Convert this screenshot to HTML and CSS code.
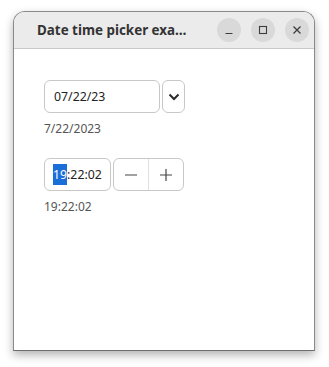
FILE: index.html
```html
<!DOCTYPE html>
<html>
<head>
<meta charset="utf-8">
<link rel="stylesheet" href="styles.css">
</head>
<body>
<div class="window">
  <div class="titlebar">
    <div class="title">Date time picker exa…</div>
    <div class="controls">
      <div class="ctl"><svg width="10" height="10" viewBox="0 0 10 10"><path d="M1.5 8.5h7" stroke="#3d3d3d" stroke-width="1.2"/></svg></div>
      <div class="ctl"><svg width="10" height="10" viewBox="0 0 10 10"><rect x="1.5" y="1.5" width="7" height="7" fill="none" stroke="#3d3d3d" stroke-width="1.1"/></svg></div>
      <div class="ctl"><svg width="10" height="10" viewBox="0 0 10 10"><path d="M1.5 1.5l7 7M8.5 1.5l-7 7" stroke="#3d3d3d" stroke-width="1.3"/></svg></div>
    </div>
  </div>
  <div class="content">
    <div class="group">
      <div class="row">
        <div class="field date">07/22/23</div>
        <div class="dropbtn"><svg width="12" height="8" viewBox="0 0 12 8"><path d="M1.5 1.5l4.5 4.5 4.5-4.5" fill="none" stroke="#2b2b2b" stroke-width="2"/></svg></div>
      </div>
      <div class="value">7/22/2023</div>
    </div>
    <div class="group">
      <div class="row">
        <div class="field time"><span class="sel">19</span>:22:02</div>
        <div class="spin">
          <div class="sbtn"><svg width="14" height="14" viewBox="0 0 14 14"><path d="M1 7h12" stroke="#444" stroke-width="1.2"/></svg></div>
          <div class="sbtn"><svg width="14" height="14" viewBox="0 0 14 14"><path d="M1 7h12M7 1v12" stroke="#444" stroke-width="1.2"/></svg></div>
        </div>
      </div>
      <div class="value">19:22:02</div>
    </div>
  </div>
</div>
</body>
</html>
```
FILE: styles.css
```css
html, body {
  margin: 0;
  padding: 0;
  background: #ffffff;
  width: 329px;
  height: 367px;
  overflow: hidden;
}
body {
  padding: 11px 0 0 13px;
  box-sizing: border-box;
}
.window {
  width: 302px;
  height: 340px;
  box-sizing: border-box;
  border: 1px solid #8a8a8a;
  border-bottom-color: #6e6e6e;
  border-radius: 12px 12px 0 0;
  background: #ffffff;
  box-shadow: 0 4px 10px rgba(0,0,0,0.3);
  display: flex;
  flex-direction: column;
  overflow: hidden;
}
.titlebar {
  height: 36px;
  flex: none;
  background: #ebebeb;
  border-bottom: 1px solid #c9c9c9;
  display: flex;
  align-items: center;
  padding: 0 5px 0 23px;
}
.title {
  flex: 1;
  font-family: "Noto Sans", "Open Sans", sans-serif;
  font-weight: bold;
  font-size: 13.4px;
  color: #333333;
}
.controls {
  display: flex;
  gap: 10px;
}
.ctl {
  width: 24px;
  height: 24px;
  border-radius: 50%;
  background: #d9d9d9;
  display: flex;
  align-items: center;
  justify-content: center;
}
.content {
  padding: 31px 0 0 30px;
  display: flex;
  flex-direction: column;
  gap: 21px;
  font-family: "Noto Sans", "Open Sans", sans-serif;
}
.group {
  display: flex;
  flex-direction: column;
}
.row {
  display: flex;
  gap: 2px;
}
.field {
  height: 33px;
  box-sizing: border-box;
  border: 1px solid #c8c8c8;
  border-radius: 6px;
  font-size: 12.3px;
  color: #222;
  display: flex;
  align-items: center;
  padding-left: 8px;
}
.date {
  width: 116px;
  padding-left: 9px;
}
.dropbtn {
  width: 23px;
  height: 33px;
  box-sizing: border-box;
  border: 1px solid #c8c8c8;
  border-radius: 6px;
  display: flex;
  align-items: center;
  justify-content: center;
}
.time {
  width: 67px;
  padding-left: 8px;
}
.sel {
  background: #1a6ed8;
  color: #ffffff;
  padding: 2px 0;
}
.spin {
  width: 71px;
  height: 33px;
  box-sizing: border-box;
  border: 1px solid #c8c8c8;
  border-radius: 6px;
  display: flex;
}
.sbtn {
  flex: 1;
  display: flex;
  align-items: center;
  justify-content: center;
}
.sbtn + .sbtn {
  border-left: 1px solid #e0e0e0;
}
.value {
  margin-top: 7px;
  font-size: 12px;
  color: #555555;
}
```
